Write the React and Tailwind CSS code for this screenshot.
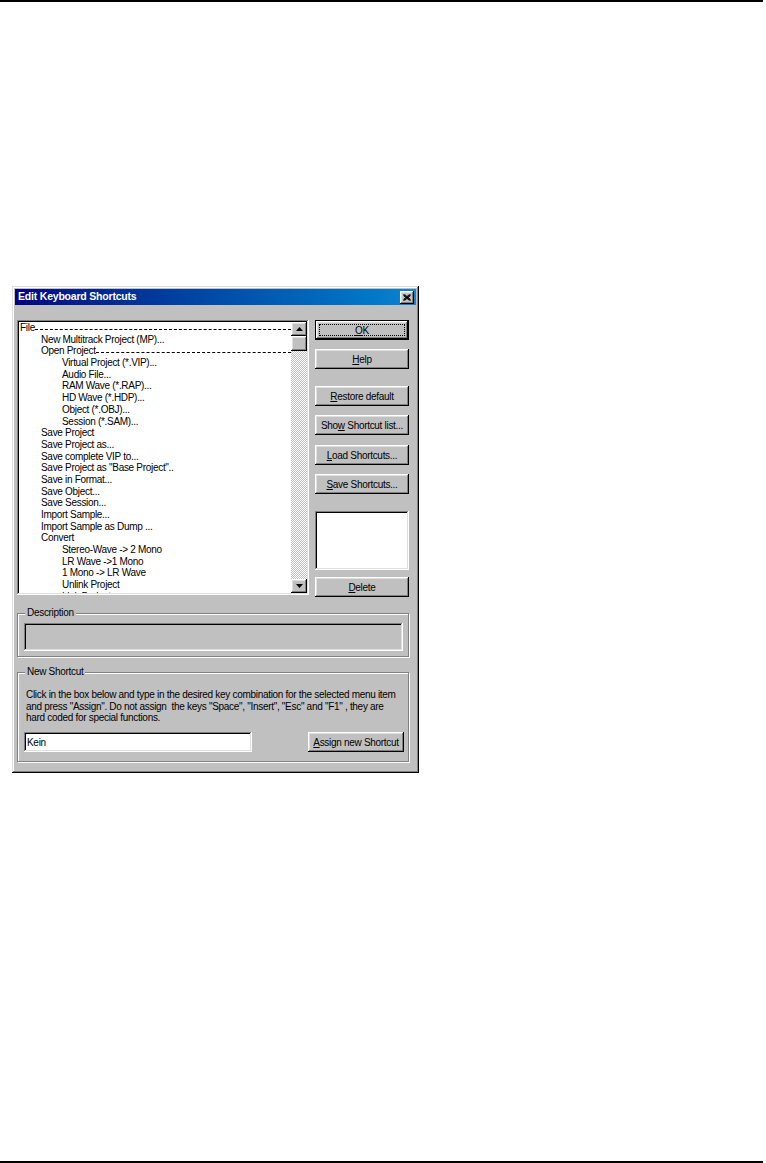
import React from 'react'

const FONT = "font-['Liberation_Sans',Arial,sans-serif]"

const RAISED =
  'shadow-[inset_-1px_-1px_#000,inset_1px_1px_#fff,inset_-2px_-2px_#808080,inset_2px_2px_#dfdfdf]'
const SUNKEN =
  'shadow-[inset_-1px_-1px_#fff,inset_1px_1px_#808080,inset_-2px_-2px_#dfdfdf,inset_2px_2px_#000]'

const items = [
  [0, 'File', true],
  [1, 'New Multitrack Project (MP)...'],
  [1, 'Open Project', true],
  [2, 'Virtual Project (*.VIP)...'],
  [2, 'Audio File...'],
  [2, 'RAM Wave (*.RAP)...'],
  [2, 'HD Wave (*.HDP)...'],
  [2, 'Object (*.OBJ)...'],
  [2, 'Session (*.SAM)...'],
  [1, 'Save Project'],
  [1, 'Save Project as...'],
  [1, 'Save complete VIP to...'],
  [1, 'Save Project as "Base Project"..'],
  [1, 'Save in Format...'],
  [1, 'Save Object...'],
  [1, 'Save Session...'],
  [1, 'Import Sample...'],
  [1, 'Import Sample as Dump ...'],
  [1, 'Convert'],
  [2, 'Stereo-Wave -> 2 Mono'],
  [2, 'LR Wave ->1 Mono'],
  [2, '1 Mono -> LR Wave'],
  [2, 'Unlink Project'],
  [2, 'Link Projects'],
]

const indent = ['pl-[1px]', 'pl-[22px]', 'pl-[43px]']

function Btn({ pre = '', u, post = '', className = '', focus = false }) {
  if (focus) {
    return (
      <div className={`h-[20px] border border-black bg-[#c0c0c0] ${className}`}>
        <div className={`h-full p-[3px] ${RAISED}`}>
          <div className="h-full border border-dotted border-black flex items-center justify-center">
            <span>{pre}<span className="underline">{u}</span>{post}</span>
          </div>
        </div>
      </div>
    )
  }
  return (
    <div className={`h-[20px] bg-[#c0c0c0] flex items-center justify-center ${RAISED} ${className}`}>
      <span>{pre}<span className="underline underline-offset-1">{u}</span>{post}</span>
    </div>
  )
}

function Arrow({ down }) {
  return (
    <div className={`h-[14px] bg-[#c0c0c0] flex items-center justify-center ${RAISED}`}>
      <svg width="7" height="4" viewBox="0 0 7 4">
        {down ? <polygon points="0,0 7,0 3.5,4" fill="#000" /> : <polygon points="0,4 7,4 3.5,0" fill="#000" />}
      </svg>
    </div>
  )
}

function Group({ label, className = '', children }) {
  return (
    <div className={`relative border border-[#808080] shadow-[inset_1px_1px_#fff,1px_1px_#fff] ${className}`}>
      <span className="absolute -top-[7px] left-[7px] bg-[#c0c0c0] px-[2px] leading-[12px]">{label}</span>
      {children}
    </div>
  )
}

export default function App() {
  return (
    <div className={`w-[766px] h-[1163px] bg-white flex flex-col ${FONT} text-[10px] tracking-[-0.3px] text-black`}>
      <div className="h-[2px] w-[763px] bg-black" />
      <div className={`mt-[284px] ml-[12px] w-[407px] h-[487px] bg-[#c0c0c0] p-[3px] flex flex-col shadow-[inset_-1px_-1px_#000,inset_1px_1px_#dfdfdf,inset_-2px_-2px_#808080,inset_2px_2px_#fff]`}>
        {/* title bar */}
        <div className="h-[18px] bg-gradient-to-r from-[#000080] to-[#1084d0] flex items-center pl-[3px] pr-[2px]">
          <span className="flex-1 text-white font-bold text-[10.5px] tracking-[-0.2px]">Edit Keyboard Shortcuts</span>
          <div className={`w-[14px] h-[13px] bg-[#c0c0c0] flex items-center justify-center ${RAISED}`}>
            <svg width="8" height="7" viewBox="0 0 8 7">
              <path d="M0.5 0.5 L7.5 6.5 M1.5 0.5 L7.5 5.5 M0.5 1.5 L6.5 6.5 M7.5 0.5 L0.5 6.5 M6.5 0.5 L0.5 5.5 M7.5 1.5 L1.5 6.5" stroke="#000" strokeWidth="1" />
            </svg>
          </div>
        </div>

        <div className="flex-1 flex flex-col pl-[2px] pr-[7px] pt-[15px] pb-[8px]">
          <div className="flex">
            {/* tree list */}
            <div className={`w-[292px] h-[275px] bg-white p-[2px] flex ${SUNKEN}`}>
              <div className="flex-1 overflow-hidden">
                {items.map(([lvl, text, dash], i) => (
                  <div key={i} className={`h-[11.7px] leading-[11.7px] flex whitespace-nowrap ${indent[lvl]}`}>
                    <span>{text}</span>
                    {dash && <div className="flex-1 self-end mb-[4px] border-b border-dashed border-black" />}
                  </div>
                ))}
              </div>
              <div className="w-[16px] flex flex-col">
                <Arrow />
                <div className={`h-[15px] bg-[#c0c0c0] ${RAISED}`} />
                <div className="flex-1 bg-[image:repeating-conic-gradient(#c0c0c0_0%_25%,#ffffff_0%_50%)] bg-[length:2px_2px]" />
                <Arrow down />
              </div>
            </div>

            {/* buttons */}
            <div className="ml-[6px] w-[94px] flex flex-col">
              <Btn u="O" post="K" focus />
              <Btn u="H" post="elp" className="mt-[9px]" />
              <Btn u="R" post="estore default" className="mt-[17px]" />
              <Btn pre="Sho" u="w" post=" Shortcut list..." className="mt-[9px]" />
              <Btn u="L" post="oad Shortcuts..." className="mt-[10px]" />
              <Btn u="S" post="ave Shortcuts..." className="mt-[9px]" />
              <div className={`mt-[17px] h-[59px] bg-white ${SUNKEN}`} />
              <Btn u="D" post="elete" className="mt-[7px]" />
            </div>
          </div>

          <Group label="Description" className="mt-[16px] h-[44px] pt-[9px] pl-[6px] pr-[5px]">
            <div className={`h-[28px] bg-[#c0c0c0] ${SUNKEN}`} />
          </Group>

          <Group label="New Shortcut" className="mt-[15px] h-[90px] pt-[16px] pl-[8px] pr-[4px]">
            <p className="leading-[11.7px] whitespace-nowrap">
              Click in the box below and type in the desired key combination for the selected menu item<br />
              and press "Assign". Do not assign&nbsp; the keys "Space", "Insert", "Esc" and "F1" , they are<br />
              hard coded for special functions.
            </p>
            <div className="mt-[8px] flex items-center">
              <div className={`-ml-[2px] w-[228px] h-[20px] bg-white flex items-center pl-[3px] ${SUNKEN}`}>
                <span>Kein</span>
              </div>
              <div className="flex-1" />
              <Btn u="A" post="ssign new Shortcut" className="w-[96px]" />
            </div>
          </Group>
        </div>
      </div>
      <div className="flex-1" />
      <div className="h-[2px] w-[763px] bg-black" />
    </div>
  )
}
